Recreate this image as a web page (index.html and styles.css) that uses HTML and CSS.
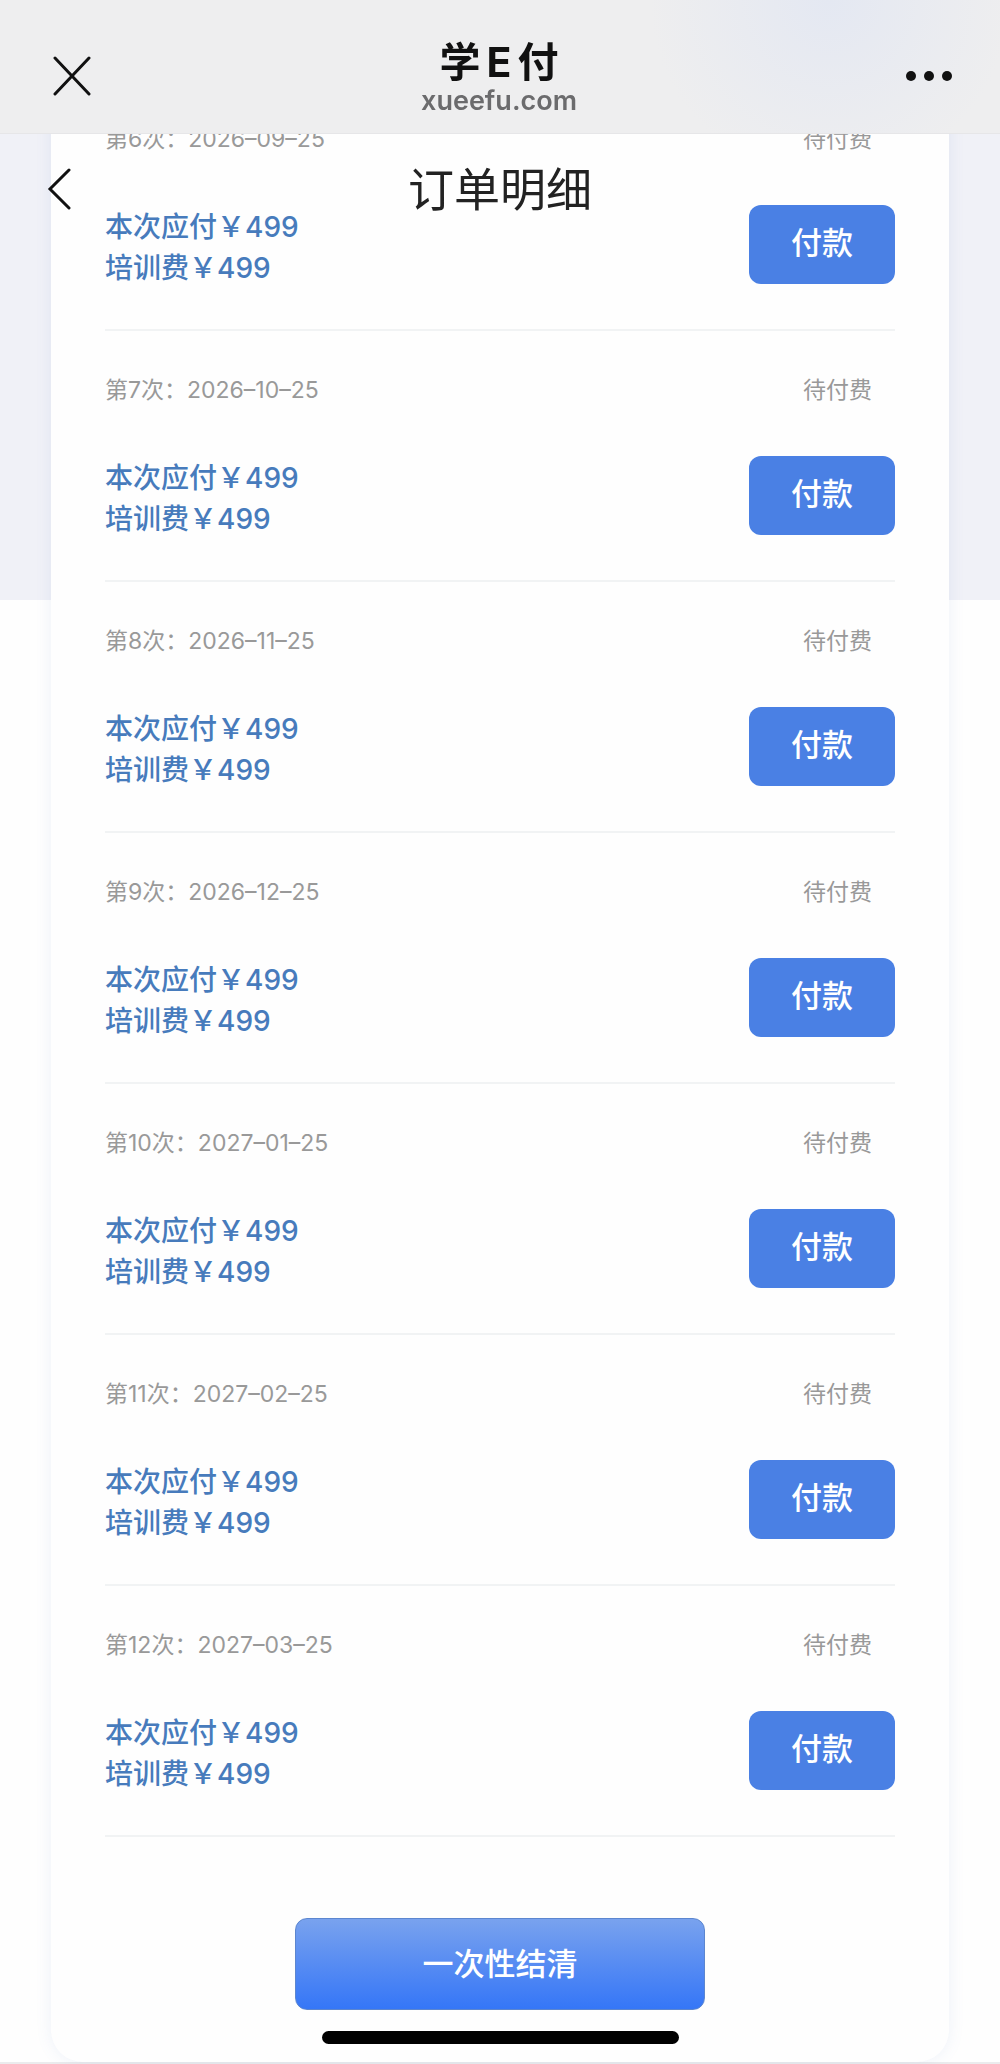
FILE: index.html
```html
<!DOCTYPE html>
<html lang="zh-CN">
<head>
    <meta charset="UTF-8">
    <meta name="viewport" content="width=device-width, initial-scale=1.0">
    <title>订单明细</title>
    <link rel="stylesheet" href="styles.css">
</head>
<body>

<header class="topbar">
    <button class="icon-btn" type="button" aria-label="关闭">
        <svg width="40" height="40" viewBox="0 0 40 40"><path d="M3 2 L37 38 M37 2 L3 38"/></svg>
    </button>
    <div class="site">
        <div class="site-name"><span>学</span><span>E</span><span>付</span></div>
        <div class="site-url">xueefu.com</div>
    </div>
    <button class="icon-btn" type="button" aria-label="更多">
        <svg width="46" height="12" viewBox="0 0 46 12"><circle cx="5" cy="6" r="5"/><circle cx="23" cy="6" r="5"/><circle cx="41" cy="6" r="5"/></svg>
    </button>
</header>

<!-- Barra de título sobre la lista -->
<div class="navbar">
    <button class="back" type="button" aria-label="返回">
        <svg width="24" height="42" viewBox="0 0 24 42"><path d="M22 2 L3 21 L22 40"/></svg>
    </button>
    <h1>订单明细</h1>
</div>

<main class="page">
    <div class="card">
        <ul class="bills" id="bills"></ul>
        <button class="settle" type="button">一次性结清</button>
    </div>
</main>

<div class="home-bar"></div>

<script>
    const fechas = [
        [6, '2026–09–25'],
        [7, '2026–10–25'],
        [8, '2026–11–25'],
        [9, '2026–12–25'],
        [10, '2027–01–25'],
        [11, '2027–02–25'],
        [12, '2027–03–25']
    ];

    document.getElementById('bills').innerHTML = fechas.map(([n, fecha]) => `
        <li class="bill">
            <div class="bill-head">
                <span>第${n}次：${fecha}</span>
                <span>待付费</span>
            </div>
            <div class="bill-body">
                <div class="amount">
                    <div>本次应付￥499</div>
                    <div>培训费￥499</div>
                </div>
                <button class="pay" type="button">付款</button>
            </div>
        </li>
    `).join('');
</script>

</body>
</html>
```
FILE: styles.css
```css
* {
    box-sizing: border-box;
}
body {
    margin: 0;
    font-family: Inter, "Noto Sans CJK SC", sans-serif;
    background-color: #fefefe;
    color: #222;
}
button {
    padding: 0;
    border: none;
    background: none;
    font-family: inherit;
    cursor: pointer;
}
svg {
    display: block;
    fill: none;
    stroke: #111;
    stroke-width: 3;
    stroke-linecap: round;
}
svg circle {
    fill: #111;
    stroke: none;
}
.topbar {
    position: fixed;
    top: 0;
    left: 0;
    right: 0;
    z-index: 3;
    height: 134px;
    padding: 18px 48px 0 52px;
    display: flex;
    align-items: center;
    justify-content: space-between;
    background: radial-gradient(circle at 83% 0, #e4e8f2, #eeeeef 180px);
    border-bottom: 1px solid #e6e6e8;
}
.site {
    padding-top: 4px;
}
.site-name {
    display: flex;
    justify-content: center;
    gap: 6px;
    font-size: 41px;
    line-height: 46px;
    font-weight: bold;
    color: #111;
}
.site-url {
    text-align: center;
    font-size: 27px;
    line-height: 32px;
    font-weight: 600;
    color: #6b6b6d;
}
.navbar {
    position: fixed;
    top: 134px;
    left: 0;
    right: 0;
    z-index: 2;
    height: 110px;
    display: flex;
    align-items: center;
    justify-content: center;
}
.navbar h1 {
    margin: 0;
    font-size: 46px;
    line-height: 56px;
    font-weight: 400;
}
.back {
    position: absolute;
    left: 47px;
}
.page {
    padding: 80px 51px 0;
    border-bottom: 2px solid #ebebed;
    background: linear-gradient(#f0f1f7, #f0f1f7) no-repeat 0 0 / 100% 600px;
}
.card {
    padding: 0 54px 52px;
    background-color: #fefefe;
    border-radius: 0 0 32px 32px;
    box-shadow: 0 0 16px rgba(90, 130, 200, 0.1);
}
.bills {
    margin: 0;
    padding: 0;
    list-style: none;
}
.bill {
    height: 251px;
    padding-top: 41px;
    border-bottom: 2px solid #f1f3f4;
}
.bill-head {
    display: flex;
    justify-content: space-between;
    padding-right: 23px;
    font-size: 23px;
    line-height: 36px;
    color: #999;
}
.bill-body {
    margin-top: 48px;
    display: flex;
    justify-content: space-between;
}
.amount {
    padding-top: 2px;
    font-size: 28px;
    line-height: 41px;
    font-weight: 500;
    color: #477bbc;
}
.pay {
    width: 146px;
    height: 79px;
    padding-bottom: 8px;
    border-radius: 12px;
    background-color: #4a80e4;
    color: #fff;
    font-size: 31px;
    font-weight: 500;
}
.settle {
    display: block;
    width: 410px;
    height: 92px;
    margin: 81px auto 0;
    padding-bottom: 6px;
    border: 1px solid #5c86cf;
    border-radius: 12px;
    background: linear-gradient(#79a2ee, #3576f7);
    color: #fff;
    font-size: 31px;
    font-weight: 500;
}
.home-bar {
    position: fixed;
    left: 50%;
    bottom: 20px;
    width: 357px;
    height: 13px;
    margin-left: -178px;
    border-radius: 7px;
    background-color: #000;
}
```
